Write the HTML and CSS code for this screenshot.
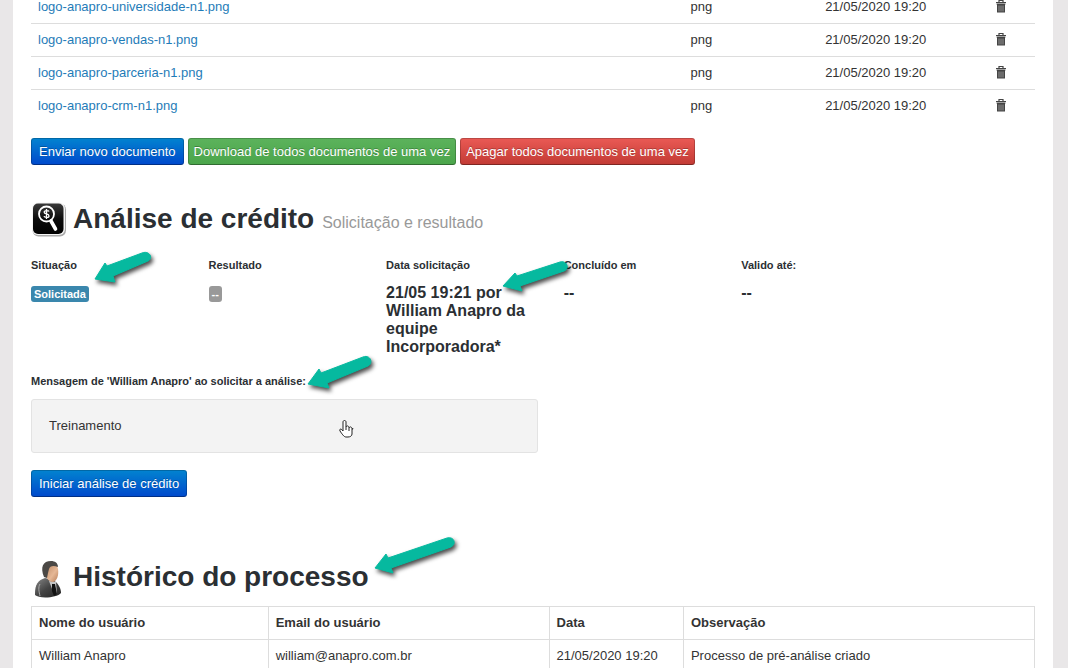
FILE: index.html
```html
<!DOCTYPE html>
<html lang="pt-BR">
<head>
	<meta charset="UTF-8">
	<title>Análise de crédito</title>
	<link rel="stylesheet" href="styles.css">
</head>
<body>
	<svg class="defs" width="0" height="0">
		<symbol id="trash" viewBox="0 0 10 13">
			<path d="M3 2V0.5H7V2M0 2.5H10M0.5 4H9.5" fill="none" stroke="#444" stroke-width="1.2"/>
			<path d="M1 4H9V12.5H1Z" fill="#444"/>
			<path d="M3 5.5V11.5M5 5.5V11.5M7 5.5V11.5" stroke="#aaa" stroke-width="0.8"/>
		</symbol>
	</svg>
	<main class="page">
		<table class="files">
			<tbody>
				<tr>
					<td><a href="#">logo-anapro-universidade-n1.png</a></td>
					<td>png</td>
					<td>21/05/2020 19:20</td>
					<td><button class="trash" aria-label="Apagar"><svg><use href="#trash"/></svg></button></td>
				</tr>
				<tr>
					<td><a href="#">logo-anapro-vendas-n1.png</a></td>
					<td>png</td>
					<td>21/05/2020 19:20</td>
					<td><button class="trash" aria-label="Apagar"><svg><use href="#trash"/></svg></button></td>
				</tr>
				<tr>
					<td><a href="#">logo-anapro-parceria-n1.png</a></td>
					<td>png</td>
					<td>21/05/2020 19:20</td>
					<td><button class="trash" aria-label="Apagar"><svg><use href="#trash"/></svg></button></td>
				</tr>
				<tr>
					<td><a href="#">logo-anapro-crm-n1.png</a></td>
					<td>png</td>
					<td>21/05/2020 19:20</td>
					<td><button class="trash" aria-label="Apagar"><svg><use href="#trash"/></svg></button></td>
				</tr>
			</tbody>
		</table>
		<div class="actions">
			<button class="btn btn-primary">Enviar novo documento</button>
			<button class="btn btn-success">Download de todos documentos de uma vez</button>
			<button class="btn btn-danger">Apagar todos documentos de uma vez</button>
		</div>

		<section class="analysis">
			<div class="title">
				<svg class="title-icon" viewBox="0 0 36 36">
					<defs>
						<linearGradient id="tile" x1="0" y1="0" x2="0" y2="1">
							<stop offset="0" stop-color="#3a3a3a"/>
							<stop offset="0.5" stop-color="#0c0c0c"/>
							<stop offset="1" stop-color="#000"/>
						</linearGradient>
					</defs>
					<rect x="1.5" y="2.5" width="33.5" height="33" rx="6" fill="#aaa"/>
					<rect x="1" y="1.5" width="33" height="32.5" rx="6" fill="#f4f4f4"/>
					<rect x="2" y="2.5" width="30.5" height="30.5" rx="5" fill="url(#tile)"/>
					<circle cx="15.5" cy="13" r="7.5" fill="none" stroke="#fff" stroke-width="1.8"/>
					<path d="M20 20L24.5 28" stroke="#fff" stroke-width="3.6" stroke-linecap="round"/>
					<path d="M18 10.5C17.5 9.2 13.2 9 13.2 11.2C13.2 13.5 18 12.4 18 14.9C18 17 13.4 16.8 13 15.2M15.5 8V18" fill="none" stroke="#fff" stroke-width="1.3"/>
				</svg>
				<h1>Análise de crédito</h1>
				<small>Solicitação e resultado</small>
			</div>
			<div class="status">
				<div>
					<h6>Situação</h6>
					<span class="label label-info">Solicitada</span>
				</div>
				<div>
					<h6>Resultado</h6>
					<span class="label">--</span>
				</div>
				<div>
					<h6>Data solicitação</h6>
					<h4>21/05 19:21 por William Anapro da equipe Incorporadora*</h4>
				</div>
				<div>
					<h6>Concluído em</h6>
					<h4>--</h4>
				</div>
				<div>
					<h6>Valido até:</h6>
					<h4>--</h4>
				</div>
			</div>
			<h6>Mensagem de 'William Anapro' ao solicitar a análise:</h6>
			<div class="well">Treinamento</div>
			<button class="btn btn-primary">Iniciar análise de crédito</button>
		</section>

		<section class="history">
			<div class="title">
				<svg class="title-icon" viewBox="0 0 36 40">
					<defs>
						<linearGradient id="skin" x1="0" y1="0" x2="1" y2="1">
							<stop offset="0" stop-color="#b98460"/>
							<stop offset="0.6" stop-color="#e6b896"/>
							<stop offset="1" stop-color="#b77f5a"/>
						</linearGradient>
						<linearGradient id="suit" x1="0" y1="0" x2="1" y2="1">
							<stop offset="0" stop-color="#888"/>
							<stop offset="0.5" stop-color="#444"/>
							<stop offset="1" stop-color="#222"/>
						</linearGradient>
					</defs>
					<path d="M4 34C4 26 7 21 14 19L22 21C27 24 30 29 30 34C26 39 8 40 4 36Z" fill="url(#suit)"/>
					<path d="M18 22L25 23L26 35L23 35Z" fill="#c4c4c4"/>
					<path d="M21 25L24 25L26 35L23 37L21 32Z" fill="#111"/>
					<path d="M9 25C7 28 8 33 9 37" fill="none" stroke="#aaa" stroke-width="1"/>
					<path d="M14 7C18 3 26 4 27 10C28 16 26 22 22 23C18 23 14 18 14 13Z" fill="url(#skin)"/>
					<path d="M13 18C9 8 12 2 20 2C24 2 27 4 27 8C22 6 19 7 18 10L17 14L16 19Z" fill="#4b4845"/>
				</svg>
				<h1>Histórico do processo</h1>
			</div>
			<table class="log">
				<thead>
					<tr>
						<th>Nome do usuário</th>
						<th>Email do usuário</th>
						<th>Data</th>
						<th>Observação</th>
					</tr>
				</thead>
				<tbody>
					<tr>
						<td>William Anapro</td>
						<td>william@anapro.com.br</td>
						<td>21/05/2020 19:20</td>
						<td>Processo de pré-análise criado</td>
					</tr>
				</tbody>
			</table>
		</section>
	</main>

	<!-- tutorial arrows and pointer, over the page -->
	<svg class="overlay" width="1068" height="668" viewBox="0 0 1068 668">
		<g class="arrows">
			<path d="M95 279L105 263L107 266L142 253C149 250 154 258 148 261L113 276L115 282Z"/>
			<path d="M503 286L515 273L517 276L560 262C567 260 570 269 564 271L520 286L522 291Z"/>
			<path d="M308 384L319 369L321 373L363 357C370 354 374 363 368 366L327 383L329 388Z"/>
			<path d="M375 568L386 554L388 558L447 538C454 536 457 544 451 547L391 568L393 573Z"/>
		</g>
		<path class="hand" d="M343 431V422C343 420 346 420 346 422V427C347 425 349 426 349 428C350 426 352 427 352 429C353 428 354 429 352 429V434C352 436 350 437 348 437H346C344 437 342 434 340 431C339 429 341 428 343 431ZM346 427V430M349 428V431"/>
	</svg>
</body>
</html>
```
FILE: styles.css
```css
html{
	overflow: hidden;
}
body{
	margin: 0;
	background-color: #e9e7e8;
	font-family: "Liberation Sans", Arial, sans-serif;
	font-size: 13px;
	line-height: 20px;
	color: #333;
}
h1, h4, h6{
	margin: 0;
	color: #2b2f33;
}
h1{
	font-size: 28px;
	line-height: 36px;
}
h4{
	font-size: 16px;
	line-height: 18px;
}
h6{
	font-size: 11px;
	line-height: 18px;
}
small{
	font-size: 16px;
	color: #999;
}
a{
	color: #1f7cb8;
	text-decoration: none;
}
.defs{
	display: none;
}

/* page starts scrolled inside the first row */
.page{
	margin: -9px 15px 0 13px;
	padding: 0 18px;
	background-color: #fff;
	overflow: hidden;
}
table{
	width: 100%;
	table-layout: fixed;
	border-collapse: collapse;
}
th, td{
	box-sizing: border-box;
	padding: 6px 7px;
	text-align: left;
}
.files tr + tr td{
	border-top: 1px solid #ddd;
}
.files td:nth-child(1){
	width: 65%;
}
.files td:nth-child(2){
	width: 13.4%;
}
.files td:nth-child(3){
	width: 14.8%;
}
.trash{
	display: block;
	margin: 0 auto;
	padding: 0 0 2px;
	border: 0;
	background: none;
}
.trash svg{
	display: block;
	width: 10px;
	height: 13px;
}

.actions{
	display: flex;
	gap: 4px;
	margin-top: 16px;
}
.btn{
	height: 27px;
	padding: 0 5px;
	border: 1px solid rgba(0, 0, 0, 0.2);
	border-bottom-color: rgba(0, 0, 0, 0.35);
	border-radius: 3px;
	font: inherit;
	color: #fff;
	text-shadow: 0 -1px 0 rgba(0, 0, 0, 0.25);
	white-space: nowrap;
	background-origin: border-box;
}
.btn-primary{
	padding: 0 7px;
	background-image: linear-gradient(#0284d0, #0048cc);
}
.btn-success{
	background-image: linear-gradient(#5cb35c, #4ba54b);
}
.btn-danger{
	background-image: linear-gradient(#ea5a55, #c23a34);
}

.title{
	display: flex;
	align-items: baseline;
	gap: 8px;
}
.title-icon{
	width: 36px;
	height: 36px;
	margin-right: -2px;
	align-self: center;
}
.analysis .title{
	margin-top: 36px;
}
.status{
	display: grid;
	grid-template-columns: repeat(5, 14%);
	column-gap: 37px;
	margin: 19px 0 16px;
}
.status h6{
	margin-bottom: 10px;
}
.label{
	display: block;
	width: fit-content;
	margin-top: 12px;
	padding: 1px 3px;
	border-radius: 3px;
	background-color: #999;
	font-size: 11px;
	line-height: 14px;
	font-weight: bold;
	color: #fff;
}
.label-info{
	background-color: #3a87ad;
}
.well{
	box-sizing: border-box;
	width: 50.5%;
	margin: 9px 0 17px;
	padding: 16px 17px;
	border: 1px solid #e3e3e3;
	border-radius: 3px;
	background-color: #f3f3f3;
}

.history .title{
	margin-top: 62px;
	margin-bottom: 7px;
}
.history .title-icon{
	height: 40px;
}
.log th, .log td{
	border: 1px solid #ddd;
}
.log th:nth-child(1){
	width: 23.6%;
}
.log th:nth-child(2){
	width: 28%;
}
.log th:nth-child(3){
	width: 13.4%;
}

.overlay{
	position: absolute;
	top: 0;
	left: 0;
	pointer-events: none;
}
.arrows{
	fill: #06b99f;
	stroke: #06b99f;
	stroke-width: 1;
	stroke-linejoin: round;
	filter: drop-shadow(2px 3px 2px rgba(0, 0, 0, 0.7));
}
.hand{
	fill: #fff;
	stroke: #222;
	stroke-width: 1;
}
```
